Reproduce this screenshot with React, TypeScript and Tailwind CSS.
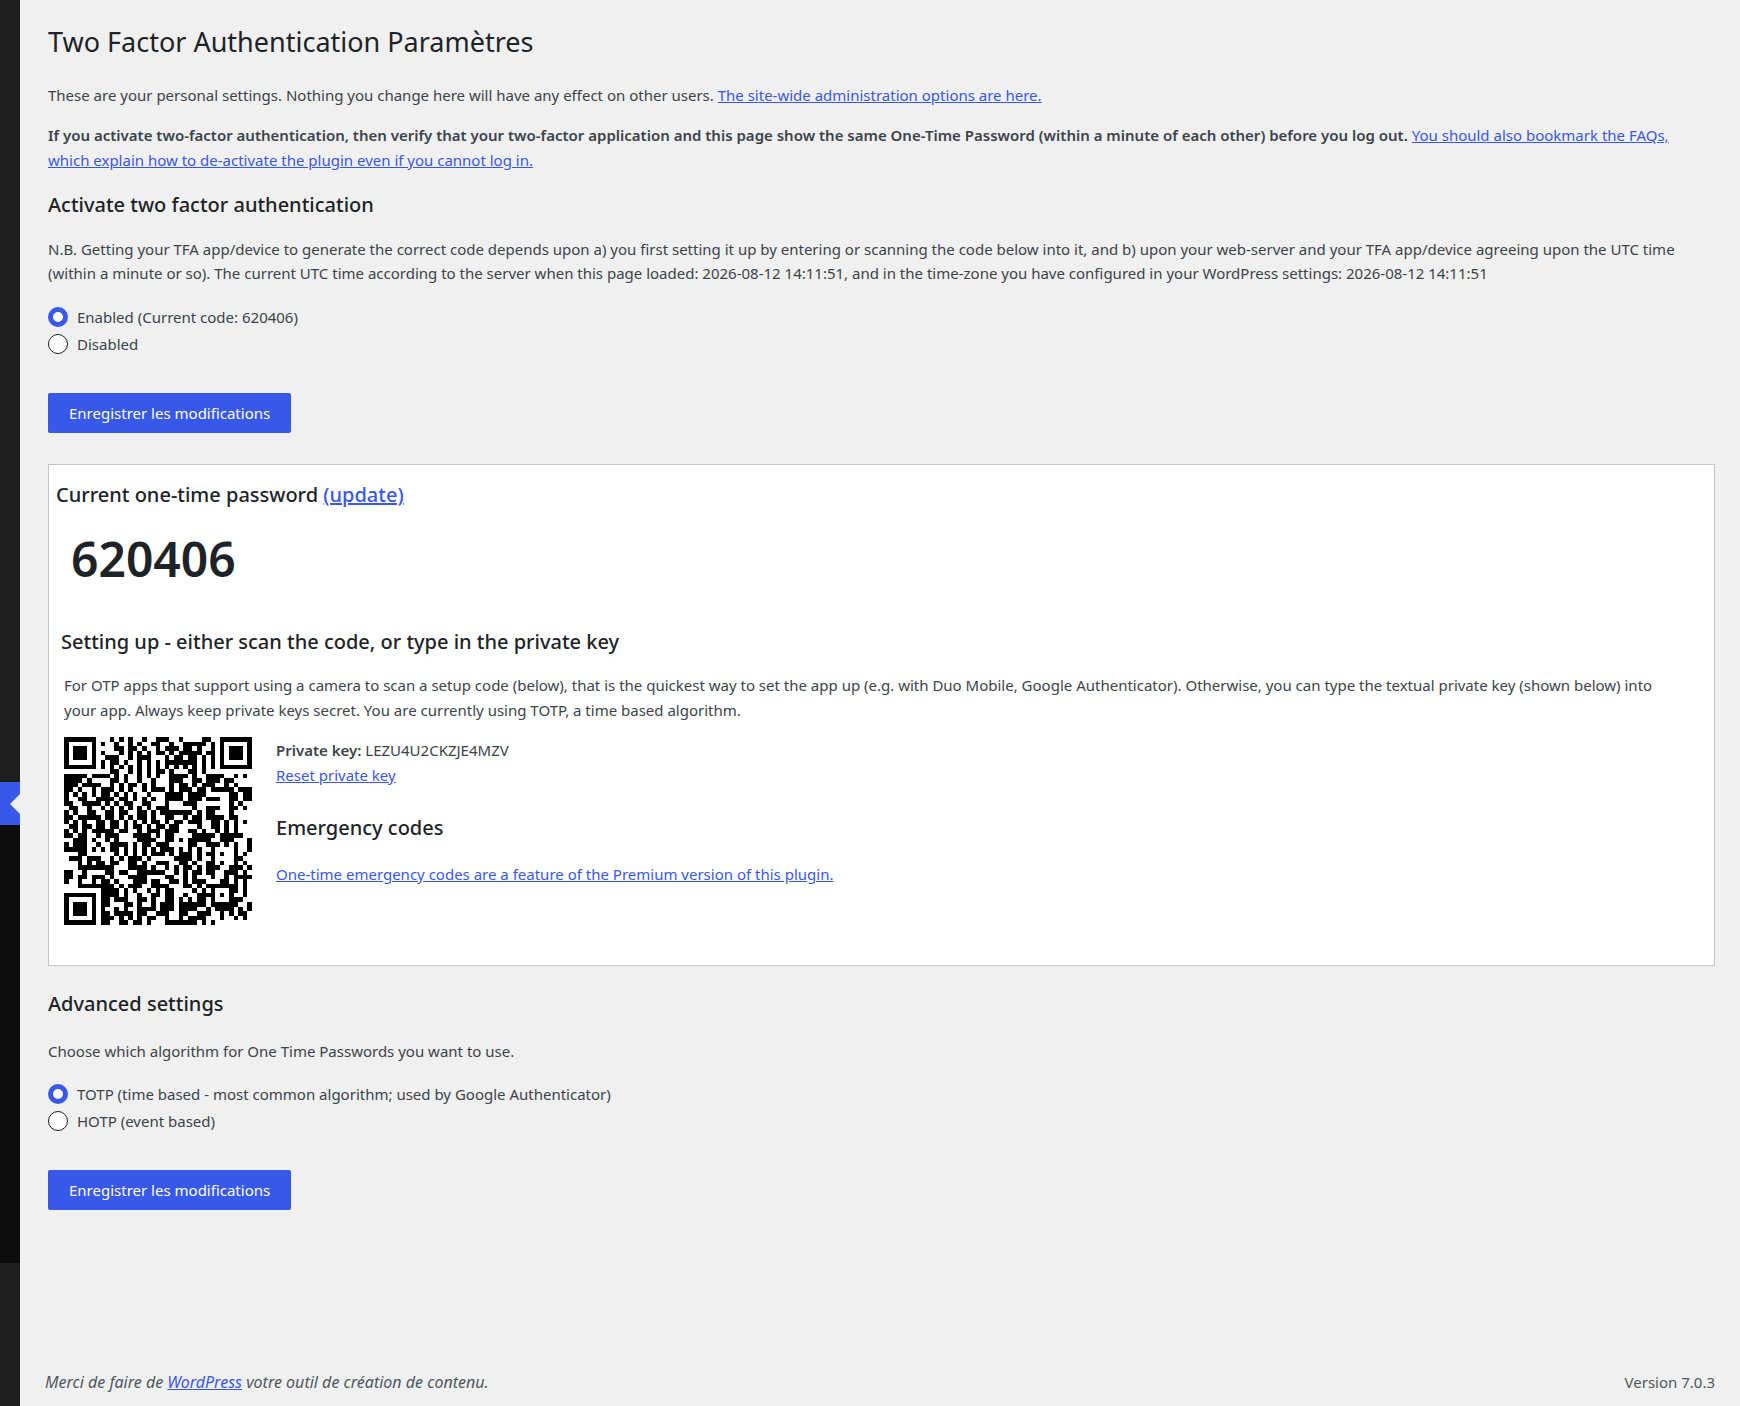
import { ReactNode, useState } from "react";
import clsx from "clsx";

const QR_ROWS = [
  "#######...#.#.#..#..###..#....##..#######",
  "#.....#.#..#..#.#..##..#..#####.#.#.....#",
  "#.###.#....##.##.#..#.###.##.#..#.#.###.#",
  "#.###.#.#...#.#.#.#.##.#.#####.##.#.###.#",
  "#.###.#..###..#.###...#.##.##.#.#.#.###.#",
  "#.....#.#.##.#..#.#.#.#######.#.#.#.....#",
  "#######.#.#.#.#.#.#.#.#.#.#.#.#.#.#######",
  "..........##..#.#.#.##.#...##.#..........",
  "#####.####.#.#..#.#.#..####.#..####..#.#.",
  "####.#....##.#..#..#...###..##.###.##....",
  "###.####..#.#.##.#.#...#.##.#.###..#.#...",
  "##.#..#.###.#.#..#.###.#.###.##.#####.###",
  "#.#.#.#.##.#.#.#..#...####.####.....##.##",
  "#..##..####.##.#.#.#..####.###.###..##.##",
  "##..####.#.#.##..##...#...###.......#.#..",
  ".##..#..#.#.#.#.#.#.###.....#..###..##.#.",
  "#.#..##..##.##..##.#.#######.#.##...#....",
  "##.#####.##.#.#.##.#..##..#.##.####.##...",
  "#.#.#..##.##.#.#.#.##.#.##.###..##.#.#.#.",
  ".##.##.##.##.#.##.#.##.##....#..##.#.#...",
  "#.#.#.#####.##..#.###.###..##.#..#.#.#...",
  "##.##..#.###...####.#.##....#####.#####..",
  "..###.#..#.#....####..##.#.#####..###...#",
  "#.###..#..####.#.##.###....##..###.#.#..#",
  "#####.#.#.##.#.#.#.#.###.#.#.#..#....#..#",
  "...##......#.#.#.#.###.#.###.#.##.#..#.#.",
  ".###.###..#.#.###.#.....####.#..#....##..",
  "...#.#.##.##..##.#..###..##.#..##.#..#.#.",
  "...########...####.#..#.#.##.#.###..###.#",
  "##..#....##.##..######..#.#.##.##..###.#.",
  "##.##.###.#...####....##..#.#...#..#.####",
  "#..#..#.##.#...###.##..##.#.###...##.#.#.",
  "...########.#.###..####...##.#.#######.#.",
  "........####.#.#..#.#.##....#.#.#...##.#.",
  "#######.####.#..#..##.##..#..####.#.#..#.",
  "#.....#.##.###..##.#..##.#.#.##.#...###..",
  "#.###.#.##...##.#..#.###.######.######..#",
  "#.###.#.#..#.#..####.###.####..#.####.#.#",
  "#.###.#.##.####.##..###..##..###..#.#.##.",
  "#.....#.###.#.#.#.##..#..#.####...#..#.#.",
  "#######.##..##.##.#...#######.#.#........",
];

function QrCode() {
  const path = QR_ROWS.map((row, y) =>
    Array.from(row)
      .map((cell, x) => (cell === "#" ? `M${x} ${y}h1v1h-1z` : ""))
      .join("")
  ).join("");

  return (
    <svg
      viewBox="0 0 41 41"
      className="size-47 shrink-0"
      shapeRendering="crispEdges"
      role="img"
      aria-label="QR code"
    >
      <path d={path} fill="#000" />
    </svg>
  );
}

function Link({ children }: { children: ReactNode }) {
  return (
    <a href="#" className="text-[#3858e9] underline">
      {children}
    </a>
  );
}

function Heading({ children }: { children: ReactNode }) {
  return (
    <h2 className="text-xl leading-7 font-medium text-[#1d2327]">
      {children}
    </h2>
  );
}

interface RadioGroupProps {
  name: string;
  options: string[];
}

function RadioGroup({ name, options }: RadioGroupProps) {
  const [selected, setSelected] = useState(0);

  return (
    <div className="flex flex-col gap-[3px]">
      {options.map((option, i) => (
        <label key={option} className="flex w-fit items-center gap-[9px]">
          <input
            type="radio"
            name={name}
            checked={selected === i}
            onChange={() => setSelected(i)}
            className={clsx(
              "size-5 appearance-none rounded-full bg-white",
              selected === i
                ? "border-5 border-[#3858e9]"
                : "border border-[#1e1e1e]"
            )}
          />
          {option}
        </label>
      ))}
    </div>
  );
}

function SaveButton() {
  return (
    <button
      type="submit"
      className="h-10 rounded-xs bg-[#3858e9] px-[21px] text-white"
    >
      Enregistrer les modifications
    </button>
  );
}

function CollapsedMenu() {
  return (
    <nav className="flex w-5 shrink-0 flex-col bg-[#1e1e1e]">
      <div className="h-[782px]" />
      <div className="flex h-[43px] items-center justify-end bg-[#3858e9]">
        <svg viewBox="0 0 10 20" className="h-5 w-[10px]">
          <path d="M10 0v20L0 10z" fill="#f0f0f0" />
        </svg>
      </div>
      <div className="h-[438px] bg-[#0c0c0c]" />
    </nav>
  );
}

export default function App() {
  return (
    <div className="flex min-h-screen bg-[#f0f0f0] font-['Noto_Sans','Open_Sans',sans-serif] text-[15px] leading-6 text-[#3c434a]">
      <CollapsedMenu />

      <div className="flex flex-1 flex-col pr-[25px] pl-[25px]">
        <main className="pl-[3px]">
          <h1 className="pt-6 text-[27px] leading-9 font-normal text-[#1d2327]">
            Two Factor Authentication Paramètres
          </h1>
          <p className="mt-[23px]">
            These are your personal settings. Nothing you change here will have
            any effect on other users.{" "}
            <Link>The site-wide administration options are here.</Link>
          </p>
          <p className="mt-4 leading-[25px]">
            <strong className="font-semibold">
              If you activate two-factor authentication, then verify that your
              two-factor application and this page show the same One-Time
              Password (within a minute of each other) before you log out.
            </strong>{" "}
            <Link>
              You should also bookmark the FAQs,
              <br />
              which explain how to de-activate the plugin even if you cannot
              log in.
            </Link>
          </p>

          <form onSubmit={(e) => e.preventDefault()} className="mt-[18px]">
            <Heading>Activate two factor authentication</Heading>
            <p className="mt-[18px] mb-5">
              N.B. Getting your TFA app/device to generate the correct code
              depends upon a) you first setting it up by entering or scanning
              the code below into it, and b) upon your web-server and your TFA
              app/device agreeing upon the UTC time (within a minute or so).
              The current UTC time according to the server when this page
              loaded: 2026-08-12 14:11:51, and in the time-zone you have
              configured in your WordPress settings: 2026-08-12 14:11:51
            </p>
            <RadioGroup
              name="tfa_enable"
              options={["Enabled (Current code: 620406)", "Disabled"]}
            />
            <div className="mt-[37px]">
              <SaveButton />
            </div>
          </form>

          <section className="mt-[31px] border border-[#c3c4c7] bg-white px-[7px] pt-4 pb-10">
            <Heading>
              Current one-time password <Link>(update)</Link>
            </Heading>
            <div className="mt-4 px-[15px] text-5xl leading-[68px] font-semibold text-[#1d2327]">
              620406
            </div>
            <div className="mt-[35px] px-[5px]">
              <Heading>
                Setting up - either scan the code, or type in the private key
              </Heading>
            </div>
            <div className="mt-[17px] px-2 leading-[25px]">
              <p>
                For OTP apps that support using a camera to scan a setup code
                (below), that is the quickest way to set the app up (e.g. with
                Duo Mobile, Google Authenticator). Otherwise, you can type the
                textual private key (shown below) into
                <br />
                your app. Always keep private keys secret. You are currently
                using TOTP, a time based algorithm.
              </p>
              <div className="mt-[14px] flex gap-6">
                <QrCode />
                <div className="pt-px">
                  <p>
                    <strong className="font-semibold">Private key:</strong>{" "}
                    LEZU4U2CKZJE4MZV
                    <br />
                    <Link>Reset private key</Link>
                  </p>
                  <div className="mt-[26px] mb-5">
                    <Heading>Emergency codes</Heading>
                  </div>
                  <Link>
                    One-time emergency codes are a feature of the Premium
                    version of this plugin.
                  </Link>
                </div>
              </div>
            </div>
          </section>

          <form onSubmit={(e) => e.preventDefault()} className="mt-6">
            <Heading>Advanced settings</Heading>
            <p className="mt-[21px] mb-[19px]">
              Choose which algorithm for One Time Passwords you want to use.
            </p>
            <RadioGroup
              name="tfa_algorithm"
              options={[
                "TOTP (time based - most common algorithm; used by Google Authenticator)",
                "HOTP (event based)",
              ]}
            />
            <div className="mt-[37px]">
              <SaveButton />
            </div>
          </form>
        </main>

        <footer className="mt-auto flex justify-between pt-10 pb-3 text-[#50575e]">
          <p className="text-base italic">
            Merci de faire de <Link>WordPress</Link> votre outil de création de
            contenu.
          </p>
          <p>Version 7.0.3</p>
        </footer>
      </div>
    </div>
  );
}
